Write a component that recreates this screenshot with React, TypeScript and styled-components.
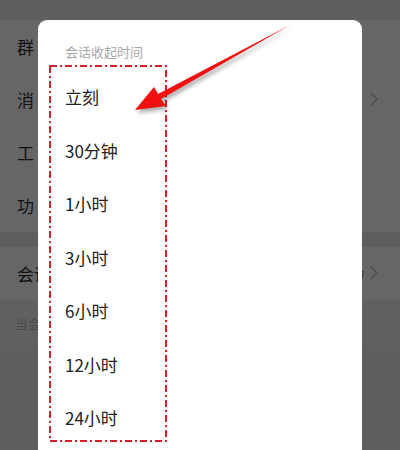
import React from "react";
import styled, { createGlobalStyle } from "styled-components";

const Global = createGlobalStyle`
  html, body { margin: 0; padding: 0; }
  body {
    width: 400px;
    height: 450px;
    overflow: hidden;
    background: #5f5f5f;
    font-family: "Noto Sans CJK SC", "Noto Sans", sans-serif;
  }
`;

const Screen = styled.div`
  position: relative;
  width: 400px;
  height: 450px;
  overflow: hidden;
  background: #5f5f5f;
`;

const StatusBar = styled.div`
  height: 20px;
  background: #5f5f5f;
`;

const Section = styled.div`
  background: #666666;
`;

const Row = styled.div`
  height: 53px;
  display: flex;
  align-items: center;
  justify-content: space-between;
  padding: 0 22px 0 17px;
  font-size: 17px;
  color: #111111;
  border-bottom: 1px solid #636363;
  box-sizing: border-box;
`;

const RowEnd = styled.div`
  display: flex;
  align-items: center;
  gap: 6px;
`;

const Value = styled.span`
  font-size: 13px;
  color: #2a2a2a;
`;

const Gap = styled.div`
  height: 15px;
  background: #5d5d5d;
`;

const Hint = styled.div`
  padding: 14px 15px;
  font-size: 13px;
  color: #4a4a4a;
  background: #606060;
`;

const Chevron = () => (
  <svg width="8" height="14" viewBox="0 0 8 14">
    <path d="M1 1 L7 7 L1 13" fill="none" stroke="#4e4e4e" strokeWidth="1.5" />
  </svg>
);

const Dialog = styled.div`
  position: absolute;
  left: 38px;
  top: 20px;
  width: 324px;
  height: 460px;
  background: #ffffff;
  border-radius: 9px;
  box-sizing: border-box;
  padding: 22px 0 0 11px;
`;

const Title = styled.div`
  font-size: 13px;
  line-height: 20px;
  color: #a8a8a8;
  padding-left: 16px;
  margin-bottom: 3px;
`;

const Options = styled.div`
  position: relative;
  width: 118px;
  height: 377px;
  padding-top: 5px;
  box-sizing: border-box;
`;

const Option = styled.div`
  height: 53.5px;
  display: flex;
  align-items: center;
  padding-left: 16px;
  font-size: 17px;
  color: #222222;
`;

const Frame = styled.svg`
  position: absolute;
  inset: 0;
  overflow: visible;
`;

const Arrow = styled.svg`
  position: absolute;
  left: 0;
  top: 0;
  filter: drop-shadow(2px 3px 2px rgba(0, 0, 0, 0.35));
`;

const rows = ["群", "消", "工", "功"];
const options = ["立刻", "30分钟", "1小时", "3小时", "6小时", "12小时", "24小时"];

export default function App() {
  return (
    <Screen>
      <Global />
      <StatusBar />
      <Section>
        {rows.map((r, i) => (
          <Row key={r}>
            <span>{r}</span>
            {i === 1 ? (
              <RowEnd>
                <Chevron />
              </RowEnd>
            ) : null}
          </Row>
        ))}
      </Section>
      <Gap />
      <Section>
        <Row>
          <span>会话</span>
          <RowEnd>
            <Value>30分钟</Value>
            <Chevron />
          </RowEnd>
        </Row>
      </Section>
      <Hint>当会话</Hint>
      <Dialog>
        <Title>会话收起时间</Title>
        <Options>
          {options.map((o) => (
            <Option key={o}>{o}</Option>
          ))}
          <Frame width="118" height="377">
            <rect
              x="1"
              y="1"
              width="116"
              height="375"
              fill="none"
              stroke="#d5212a"
              strokeWidth="2"
              strokeDasharray="7 3 2 3"
            />
          </Frame>
        </Options>
      </Dialog>
      <Arrow width="400" height="450" viewBox="0 0 400 450">
        <polygon
          points="135,110 154,87 158,94 290,25 161,99 166,106"
          fill="#f01010"
        />
      </Arrow>
    </Screen>
  );
}
